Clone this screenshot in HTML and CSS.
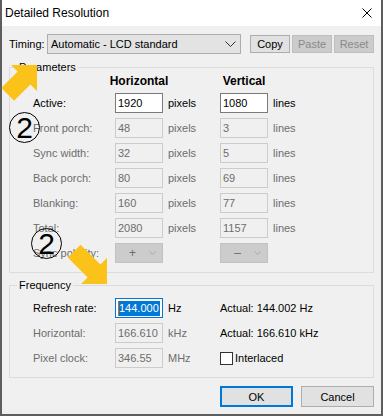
FILE: index.html
```html
<!DOCTYPE html>
<html>
<head>
<meta charset="utf-8">
<title>Detailed Resolution</title>
<link rel="stylesheet" href="styles.css">
</head>
<body>
<div class="window">
  <div class="titlebar">
    <span class="title">Detailed Resolution</span>
    <svg class="close" width="10" height="10" viewBox="0 0 10 10"><path d="M0.5 0.5 L9.5 9.5 M9.5 0.5 L0.5 9.5" stroke="#000" stroke-width="1" fill="none"/></svg>
  </div>
  <div class="content">
    <div class="timing-row">
      <span class="timing-label">Timing:</span>
      <div class="combo">
        <span>Automatic - LCD standard</span>
        <svg class="chev" width="11" height="6" viewBox="0 0 11 6"><polyline points="0.5,0.5 5.5,5.5 10.5,0.5" stroke="#333" stroke-width="1" fill="none"/></svg>
      </div>
      <div class="tbtns">
        <div class="btn">Copy</div>
        <div class="btn dis">Paste</div>
        <div class="btn dis">Reset</div>
      </div>
    </div>

    <fieldset class="group params">
      <legend>Parameters</legend>
      <div class="pgrid">
        <span></span><span class="hdr">Horizontal</span><span></span><span class="hdr">Vertical</span><span></span>

        <span class="lbl">Active:</span><div class="field">1920</div><span class="unit">pixels</span><div class="field">1080</div><span class="unit">lines</span>

        <span class="lbl g">Front porch:</span><div class="field dis">48</div><span class="unit g">pixels</span><div class="field dis">3</div><span class="unit g">lines</span>

        <span class="lbl g">Sync width:</span><div class="field dis">32</div><span class="unit g">pixels</span><div class="field dis">5</div><span class="unit g">lines</span>

        <span class="lbl g">Back porch:</span><div class="field dis">80</div><span class="unit g">pixels</span><div class="field dis">69</div><span class="unit g">lines</span>

        <span class="lbl g">Blanking:</span><div class="field dis">160</div><span class="unit g">pixels</span><div class="field dis">77</div><span class="unit g">lines</span>

        <span class="lbl g">Total:</span><div class="field dis">2080</div><span class="unit g">pixels</span><div class="field dis">1157</div><span class="unit g">lines</span>

        <span class="lbl g">Sync polarity:</span>
        <div class="pcombo"><span class="sign">+</span><svg class="pchev" width="7" height="4" viewBox="0 0 7 4"><polyline points="0.5,0.5 3.5,3.5 6.5,0.5" stroke="#a8a8a8" stroke-width="1" fill="none"/></svg></div>
        <span></span>
        <div class="pcombo"><span class="sign">&ndash;</span><svg class="pchev" width="7" height="4" viewBox="0 0 7 4"><polyline points="0.5,0.5 3.5,3.5 6.5,0.5" stroke="#a8a8a8" stroke-width="1" fill="none"/></svg></div>
        <span></span>
      </div>
    </fieldset>

    <fieldset class="group freq">
      <legend>Frequency</legend>
      <div class="fgrid">
        <span class="lbl">Refresh rate:</span>
        <div class="field focus"><span class="sel">144.000</span></div>
        <span class="unit">Hz</span>
        <span class="actual">Actual: 144.002 Hz</span>

        <span class="lbl g">Horizontal:</span>
        <div class="field dis">166.610</div>
        <span class="unit g">kHz</span>
        <span class="actual">Actual: 166.610 kHz</span>

        <span class="lbl g">Pixel clock:</span>
        <div class="field dis">346.55</div>
        <span class="unit g">MHz</span>
        <span class="check"><span class="box"></span><span>Interlaced</span></span>
      </div>
    </fieldset>

    <div class="footer">
      <div class="btn big default">OK</div>
      <div class="btn big">Cancel</div>
    </div>
  </div>

  <div class="overlay">
    <svg class="arrows" width="383" height="416" viewBox="0 0 383 416">
      <polygon points="37,65 37,91 30.4,84.4 14.1,100.7 1.3,87.9 17.6,71.6 11,65" fill="#fbc31a"/>
      <polygon points="107,284 107,258 100.4,264.6 80.6,244.8 67.8,257.6 87.6,277.4 81,284" fill="#fbc31a"/>
    </svg>
    <span class="circ c1">2</span>
    <span class="circ c2">2</span>
  </div>
</div>
</body>
</html>
```

FILE: styles.css
```css
* { box-sizing: border-box; }

html, body {
  margin: 0;
  padding: 0;
}

body {
  width: 383px;
  height: 416px;
  overflow: hidden;
  background: #f0f0f0;
  font-family: "Liberation Sans", Arial, sans-serif;
  font-size: 11px;
  color: #000;
}

.window {
  position: relative;
  width: 383px;
  height: 416px;
  border-left: 2px solid #5e5e5e;
  border-right: 2px solid #5e5e5e;
  border-bottom: 2px solid #5e5e5e;
  background: #f0f0f0;
  display: flex;
  flex-direction: column;
}

.titlebar {
  height: 26px;
  flex: 0 0 26px;
  background: #fff;
  display: flex;
  align-items: center;
  justify-content: space-between;
  padding: 0 9px 0 3px;
}

.title {
  font-size: 12px;
}

.close { display: block; }

.content {
  padding: 8px 7px 0 7px;
  display: flex;
  flex-direction: column;
}

/* timing row */
.timing-row {
  display: flex;
  align-items: center;
  height: 20px;
}

.timing-label {
  width: 38px;
}

.combo {
  width: 194px;
  height: 20px;
  background: #e3e3e3;
  border: 1px solid #adadad;
  display: flex;
  align-items: center;
  padding-left: 3px;
}

.combo .chev {
  margin-left: auto;
  margin-right: 4px;
}

.tbtns {
  display: flex;
  gap: 2px;
  margin-left: 9px;
}

.btn {
  width: 40px;
  height: 18px;
  background: #e1e1e1;
  border: 1px solid #adadad;
  display: flex;
  align-items: center;
  justify-content: center;
}

.btn.dis {
  background: #cccccc;
  border-color: #bfbfbf;
  color: #8a8a8a;
}

/* group boxes */
.group {
  margin: 0;
  padding: 0;
  border: 1px solid #dcdcdc;
  min-width: 0;
}

.group legend {
  margin-left: 7px;
  padding: 0 2px;
  line-height: 14px;
  height: 14px;
}

.params {
  margin-top: 6px;
}

.pgrid {
  display: grid;
  grid-template-columns: 82px 48px 57px 48px 1fr;
  grid-template-rows: 14px repeat(7, 20px);
  row-gap: 5px;
  align-items: center;
  padding: 0 0 9px 23px;
}

.hdr {
  font-weight: bold;
  font-size: 12px;
  justify-self: center;
  white-space: nowrap;
}

.lbl { white-space: nowrap; }
.g { color: #6d6d6d; }

.unit {
  padding-left: 5px;
  white-space: nowrap;
}

.field {
  height: 20px;
  border: 1px solid #7a7a7a;
  background: #fff;
  padding-left: 2px;
  display: flex;
  align-items: center;
  white-space: nowrap;
}

.field.dis {
  border-color: #cccccc;
  background: #f0f0f0;
  color: #6d6d6d;
}

.field.focus {
  border-color: #0078d7;
}

.sel {
  background: #0078d7;
  color: #fff;
  height: 15px;
  line-height: 15px;
  padding-right: 1px;
  border-left: 1px solid #d06a10;
}

.pcombo {
  height: 20px;
  background: #cccccc;
  border: 1px solid #c2c2c2;
  display: flex;
  align-items: center;
  padding-left: 12px;
  color: #6d6d6d;
}

.pcombo .sign {
  width: 9px;
  text-align: center;
  font-size: 12px;
}

.pcombo .pchev {
  margin-left: auto;
  margin-right: 6px;
}

.freq {
  margin-top: 5px;
}

.fgrid {
  display: grid;
  grid-template-columns: 82px 48px 57px 1fr;
  grid-template-rows: repeat(3, 20px);
  row-gap: 5px;
  align-items: center;
  padding: 6px 0 9px 23px;
}

.actual { white-space: nowrap; }

.check {
  display: flex;
  align-items: center;
  gap: 2px;
}

.check .box {
  width: 13px;
  height: 13px;
  border: 1px solid #333;
  background: #fff;
}

.footer {
  display: flex;
  justify-content: flex-end;
  gap: 8px;
  margin-top: 8px;
}

.btn.big {
  width: 73px;
  height: 21px;
}

.btn.default {
  border: 2px solid #0078d7;
}

/* annotation overlay */
.overlay {
  position: absolute;
  left: -2px;
  top: 0;
  width: 383px;
  height: 416px;
  pointer-events: none;
}

.arrows {
  position: absolute;
  left: 0;
  top: 0;
}

.circ {
  position: absolute;
  width: 31px;
  height: 31px;
  border: 1.5px solid #000;
  border-radius: 50%;
  display: flex;
  align-items: center;
  justify-content: center;
  font-size: 30px;
  line-height: 1;
  color: #000;
}

.c1 { left: 9px; top: 112px; }
.c2 { left: 31px; top: 228px; }
```
